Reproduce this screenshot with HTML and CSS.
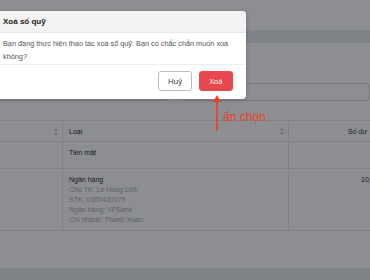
FILE: index.html
```html
<!DOCTYPE html>
<html lang="vi">
<head>
    <meta charset="UTF-8">
    <meta name="viewport" content="width=device-width, initial-scale=1.0">
    <title>Sổ quỹ</title>
    <link rel="stylesheet" href="styles.css">
</head>
<body>
    <div class="topbar"></div>

    <div class="card">
        <div class="filters">
            <div class="input input-left"></div>
            <div class="input input-right"></div>
        </div>

        <div class="table">
            <div class="row head">
                <div class="cell c1"><span class="sort"><svg width="4" height="7" viewBox="0 0 4 7"><path d="M2 0L4 2.5H0z M2 7L4 4.5H0z" fill="#c4c4c4"/></svg></span></div>
                <div class="cell c2">Loại<span class="sort"><svg width="4" height="7" viewBox="0 0 4 7"><path d="M2 0L4 2.5H0z M2 7L4 4.5H0z" fill="#c4c4c4"/></svg></span></div>
                <div class="cell c3 num">Số dư</div>
            </div>
            <div class="row r1">
                <div class="cell c1"></div>
                <div class="cell c2">Tiền mặt</div>
                <div class="cell c3 num"></div>
            </div>
            <div class="row r2">
                <div class="cell c1"></div>
                <div class="cell c2">
                    <div>Ngân hàng</div>
                    <div class="sub">Chủ TK: Le Hong Linh</div>
                    <div class="sub">STK: 0355430079</div>
                    <div class="sub">Ngân hàng: VPBank</div>
                    <div class="sub">Chi nhánh: Thanh Xuân</div>
                </div>
                <div class="cell c3 num">10,000,000</div>
            </div>
        </div>
    </div>

    <!-- Lớp phủ + hộp thoại xác nhận -->
    <div class="overlay"></div>

    <div class="modal">
        <div class="modal-header">Xoá sổ quỹ</div>
        <div class="modal-body">Bạn đang thực hiện thao tác xoá sổ quỹ. Bạn có chắc chắn muốn xoá không?</div>
        <div class="modal-footer">
            <button class="btn btn-cancel">Huỷ</button>
            <button class="btn btn-delete">Xoá</button>
        </div>
    </div>

    <!-- Chú thích -->
    <svg class="arrow" width="10" height="38" viewBox="0 0 10 38">
        <path d="M5 1L9 8H1z" fill="#f23b2c"/>
        <line x1="5" y1="6" x2="5" y2="37" stroke="#f23b2c" stroke-width="1.6"/>
    </svg>
    <div class="note">ấn chọn</div>
</body>
</html>
```

FILE: styles.css
```css
* {
    margin: 0;
    padding: 0;
    box-sizing: border-box;
}

body {
    width: 370px;
    height: 280px;
    overflow: hidden;
    background-color: #e8ebee;
    font-family: "Liberation Sans", Arial, sans-serif;
    position: relative;
}

.topbar {
    height: 30px;
    background-color: #fff;
}

.card {
    margin-top: 13px;
    height: 225px;
    background-color: #fff;
    overflow: hidden;
}

/* Ô lọc */
.filters {
    display: flex;
    padding-top: 40px;
    height: 58px;
}

.input {
    height: 18px;
    border: 1px solid #d9d9d9;
    border-radius: 3px;
}

.input-left {
    margin-left: -10px;
    width: 188px;
}

.input-right {
    margin-left: 15px;
    width: 200px;
}

/* Bảng */
.table {
    margin-top: 19px;
    border-top: 1px solid #e6e6e6;
    font-size: 7px;
    color: #333;
}

.row {
    display: flex;
    border-bottom: 1px solid #e6e6e6;
}

.head {
    height: 21px;
}

.r1 {
    height: 27px;
}

.r2 {
    height: 62px;
}

.cell {
    display: flex;
    align-items: center;
    padding: 0 6px;
}

.c1 {
    width: 62px;
    flex-shrink: 0;
    justify-content: flex-end;
    padding-right: 4px;
}

.c2 {
    width: 227px;
    flex-shrink: 0;
    border-left: 1px solid #e6e6e6;
    border-right: 1px solid #e6e6e6;
}

.c2 .sort {
    margin-left: auto;
    margin-right: -2px;
}

.c3 {
    width: 120px;
    flex-shrink: 0;
    padding-left: 59px;
}

.sort {
    display: flex;
}

.r1 .cell {
    align-items: flex-start;
    padding-top: 7px;
}

.r2 .cell {
    align-items: flex-start;
    padding-top: 6px;
}

.r2 .c2 {
    flex-direction: column;
    line-height: 10px;
}

.r2 .c3 {
    padding-top: 7px;
    padding-left: 72px;
}

.sub {
    color: #b3b3b3;
}

/* Lớp phủ tối */
.overlay {
    position: absolute;
    left: 0;
    top: 0;
    width: 100%;
    height: 100%;
    background-color: rgba(0, 5, 12, 0.45);
}

/* Hộp thoại */
.modal {
    position: absolute;
    left: -8px;
    top: 11px;
    width: 254px;
    height: 88px;
    background-color: #fff;
    border-radius: 4px;
    box-shadow: 0 1px 4px rgba(0, 0, 0, 0.2);
    overflow: hidden;
}

.modal-header {
    height: 22px;
    padding: 0 11px;
    display: flex;
    align-items: center;
    background-color: #f3f3f3;
    border-bottom: 1px solid #e8e8e8;
    font-size: 8px;
    font-weight: bold;
    color: #222;
}

.modal-body {
    height: 32px;
    padding: 4px 11px 0 11px;
    font-size: 7.3px;
    line-height: 13px;
    color: #555;
    border-bottom: 1px solid #eeeeee;
}

.modal-footer {
    display: flex;
    justify-content: flex-end;
    gap: 7px;
    padding: 6px 13px 0 0;
}

.btn {
    width: 34px;
    height: 20px;
    border-radius: 3px;
    font-family: "Noto Sans", "Liberation Sans", sans-serif;
    font-size: 7.5px;
}

.btn-cancel {
    background-color: #fff;
    border: 1px solid #bdbdbd;
    color: #333;
}

.btn-delete {
    background-color: #e6484e;
    border: 1px solid #e6484e;
    color: #fff;
}

/* Mũi tên chú thích */
.arrow {
    position: absolute;
    left: 212px;
    top: 94px;
}

.note {
    position: absolute;
    left: 223px;
    top: 110px;
    font-size: 12px;
    color: #f23b2c;
}
```
